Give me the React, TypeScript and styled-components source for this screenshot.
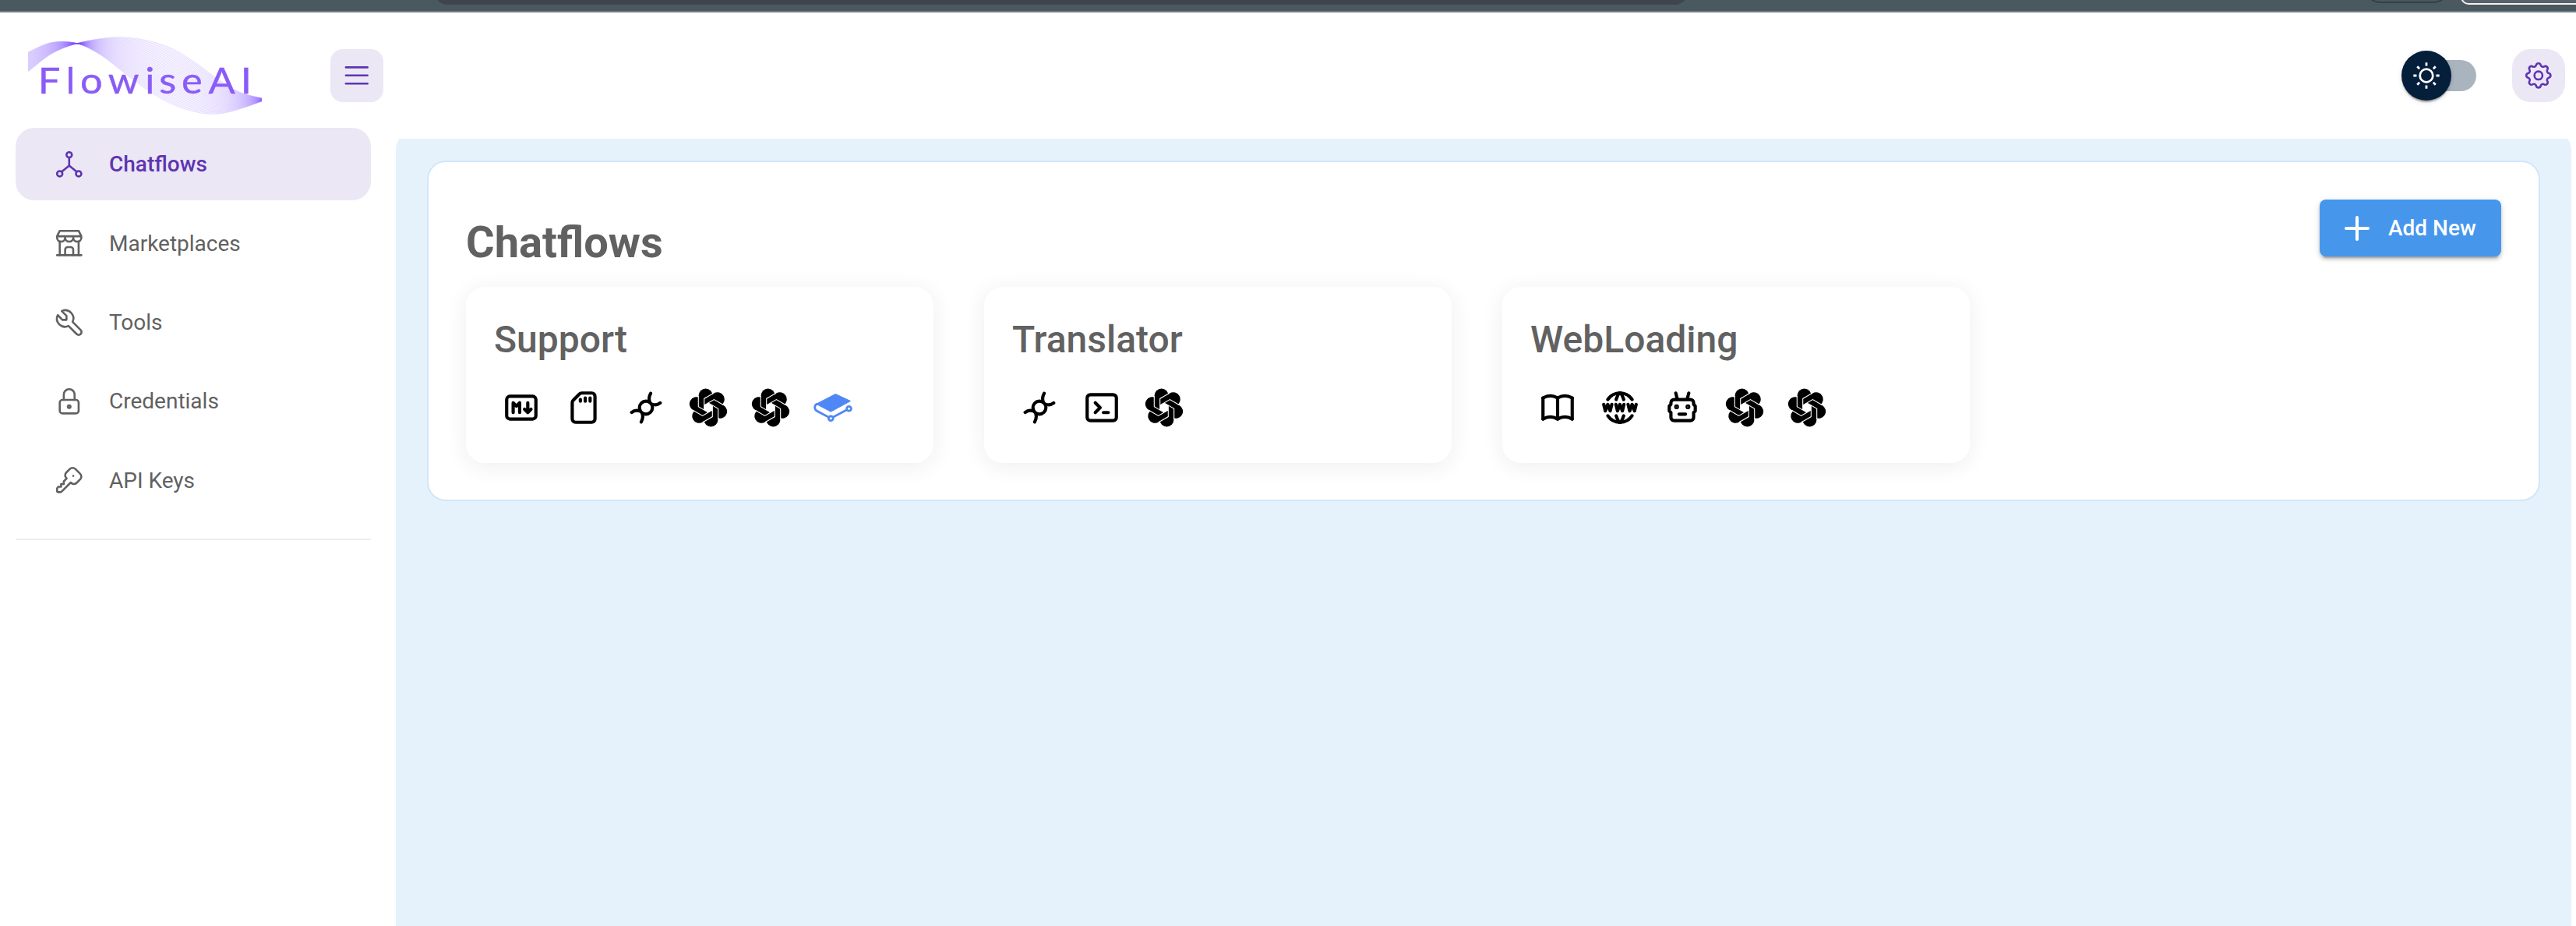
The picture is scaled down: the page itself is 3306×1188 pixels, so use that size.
import React from "react";
import styled, { createGlobalStyle } from "styled-components";
import {
  TbBook,
  TbBuildingStore,
  TbDeviceSdCard,
  TbHierarchy,
  TbKey,
  TbLock,
  TbMarkdown,
  TbMenu2,
  TbPlus,
  TbSettings,
  TbTerminal2,
  TbTool,
  TbWorldWww,
} from "react-icons/tb";

const Global = createGlobalStyle`
  * { box-sizing: border-box; }
  body { margin: 0; background: #fff; font-family: Roboto, "Liberation Sans", sans-serif; color: #616161; }
`;

const Page = styled.div`
  height: 1188px;
  display: flex;
  flex-direction: column;
  overflow: hidden;
`;

const Chrome = styled.div`
  position: relative;
  flex: none;
  height: 16px;
  background: #4a5860;
  border-bottom: 2px solid #737d83;
  overflow: hidden;
`;
const AddressBar = styled.div`
  position: absolute;
  left: 558px;
  top: -60px;
  width: 1608px;
  height: 66px;
  border-radius: 16px;
  background: #3e454d;
`;
const ChromeChip = styled.div`
  position: absolute;
  left: 3032px;
  top: -60px;
  width: 114px;
  height: 64px;
  border: 2px solid #353f46;
  border-radius: 24px;
`;
const ChromeOutline = styled.div`
  position: absolute;
  left: 3158px;
  top: -60px;
  width: 200px;
  height: 66px;
  border: 2px solid #fbeee6;
  border-radius: 10px;
  background: #56636a;
`;

const Header = styled.header`
  flex: none;
  height: 162px;
  padding: 0 14px 0 36px;
  display: flex;
  align-items: flex-start;
`;
const LogoBox = styled.div`
  width: 388px;
  padding-top: 31px;
  svg { display: block; }
`;
const IconButton = styled.button<{ $radius: number }>`
  width: 68px;
  height: 68px;
  margin-top: 47px;
  padding: 0;
  border: 0;
  border-radius: ${(p) => p.$radius}px;
  background: #ebe7f5;
  color: #5e35b1;
  display: flex;
  align-items: center;
  justify-content: center;
  svg { width: 41.6px; height: 41.6px; stroke-width: 1.5; }
`;
const Spacer = styled.div`
  flex: 1;
`;
const SwitchTrack = styled.div`
  width: 80px;
  height: 40px;
  margin: 61px 46px 0 0;
  border-radius: 20px;
  background: #aab4be;
  display: flex;
  align-items: center;
`;
const SwitchThumb = styled.div`
  flex: none;
  width: 64px;
  height: 64px;
  margin-left: -16px;
  border-radius: 50%;
  background: #051e3a;
  display: flex;
  align-items: center;
  justify-content: center;
  box-shadow: 0 4px 2px -2px rgba(0, 0, 0, 0.2), 0 2px 2px rgba(0, 0, 0, 0.14), 0 2px 6px rgba(0, 0, 0, 0.12);
`;

const Body = styled.div`
  flex: 1;
  min-height: 0;
  display: flex;
`;
const Sidebar = styled.nav`
  width: 508px;
  flex: none;
  padding: 0 32px 0 20px;
  margin-top: -14px;
`;
const NavItem = styled.a<{ $active?: boolean }>`
  display: flex;
  align-items: center;
  height: 93.36px;
  margin-bottom: 8px;
  padding-left: 48px;
  border-radius: 24px;
  font-size: 28px;
  font-weight: ${(p) => (p.$active ? 500 : 400)};
  color: ${(p) => (p.$active ? "#5e35b1" : "#616161")};
  background: ${(p) => (p.$active ? "#ebe7f5" : "transparent")};
  svg { width: 41.6px; height: 41.6px; stroke-width: 1.5; margin-right: 30.4px; }
`;
const Divider = styled.hr`
  margin: 20px 0 0;
  border: 0;
  height: 2px;
  background: #eeeeee;
`;
const NavList = styled.div`
  display: flow-root;
`;

const Main = styled.main`
  flex: 1;
  min-width: 0;
  margin-right: 6px;
  overflow: hidden;
`;
const Canvas = styled.div`
  height: 1100px;
  margin-top: -10px;
  padding: 38px 40px 0;
  border-radius: 24px;
  background: #e5f2fc;
`;
const Panel = styled.section`
  height: 437px;
  padding: 48px;
  border: 2px solid #d1e6fa;
  border-radius: 24px;
  background: #fff;
`;
const PanelHead = styled.div`
  height: 112px;
  display: flex;
  justify-content: space-between;
  align-items: flex-start;
`;
const Title = styled.h1`
  margin: 22px 0 0;
  font-size: 56px;
  line-height: 66px;
  font-weight: 700;
`;
const AddButton = styled.button`
  width: 233px;
  height: 73px;
  padding: 0 0 0 24px;
  border: 0;
  border-radius: 8px;
  background: #4697ec;
  color: #fff;
  font: 500 28px Roboto, sans-serif;
  display: flex;
  align-items: center;
  gap: 16px;
  box-shadow: 0 6px 2px -4px rgba(0, 0, 0, 0.2), 0 4px 4px rgba(0, 0, 0, 0.14), 0 2px 10px rgba(0, 0, 0, 0.12);
  svg { width: 48px; height: 48px; stroke-width: 2; }
`;
const Grid = styled.div`
  display: grid;
  grid-template-columns: repeat(4, 1fr);
  column-gap: 48px;
`;
const Card = styled.article`
  width: 600px;
  height: 226px;
  padding: 36px;
  border-radius: 24px;
  background: #fff;
  box-shadow: 0 4px 28px rgba(32, 40, 45, 0.08);
`;
const CardTitle = styled.h2`
  margin: 0;
  font-size: 48px;
  line-height: 64px;
  font-weight: 500;
`;
const NodeIcons = styled.div`
  display: flex;
  gap: 30px;
  margin: 30px 0 0 10px;
  color: #000;
  svg { width: 50px; height: 50px; flex: none; }
`;

/* The ribbon is a sheaf of strands blended between its two edge curves: [x, y of first edge, y of second edge]. */
const ribbon = [
  [0, 20, 45],
  [30, 7.5, 22],
  [62, 8.5, 9],
  [94, 24, 2.5],
  [124, 47, 1],
  [157, 71, 6],
  [186, 87, 16],
  [217, 97, 35],
  [244, 99, 55],
  [271, 93, 71],
  [300, 83, 79],
];

const strand = (t: number) => {
  const pts = ribbon.map(([x, a, b]) => [x, a + (b - a) * t]);
  let d = `M${pts[0][0]} ${pts[0][1].toFixed(2)}`;
  for (let i = 0; i < pts.length - 1; i++) {
    const p0 = pts[Math.max(i - 1, 0)];
    const p1 = pts[i];
    const p2 = pts[i + 1];
    const p3 = pts[Math.min(i + 2, pts.length - 1)];
    const c1 = [p1[0] + (p2[0] - p0[0]) / 6, p1[1] + (p2[1] - p0[1]) / 6];
    const c2 = [p2[0] - (p3[0] - p1[0]) / 6, p2[1] - (p3[1] - p1[1]) / 6];
    d += `C${[...c1, ...c2, ...p2].map((v) => v.toFixed(2)).join(" ")}`;
  }
  return d;
};

const strands = Array.from({ length: 40 }, (_, i) => strand(i / 39));

const Logo = () => (
  <svg width="300" height="104" viewBox="0 0 300 104">
    <g fill="none" stroke="#7c4dff" strokeWidth="0.7" strokeOpacity="0.27">
      {strands.map((d) => (
        <path key={d} d={d} />
      ))}
    </g>
    <text
      transform="scale(1.1 1)"
      x="11.5 44 61 93.500 136.500 153 179 210.500 248"
      y="73"
      fontFamily="Lato, sans-serif"
      fontSize="46"
      fill="#8a5cf6"
      stroke="#8a5cf6"
      strokeWidth="0.4"
    >
      FlowiseAI
    </text>
  </svg>
);

const SunIcon = () => (
  <svg width="40" height="40" viewBox="0 0 20 20">
    <path
      fill="#fff"
      d="M9.305 1.667V3.75h1.389V1.667h-1.39zm-4.707 1.95l-.982.982L5.09 6.072l.982-.982-1.473-1.473zm10.802 0L13.927 5.09l.982.982 1.473-1.473-.982-.982zM10 5.139a4.872 4.872 0 00-4.862 4.86A4.872 4.872 0 0010 14.862 4.872 4.872 0 0014.86 10 4.872 4.872 0 0010 5.139zm0 1.389A3.462 3.462 0 0113.471 10a3.462 3.462 0 01-3.473 3.472A3.462 3.462 0 016.527 10 3.462 3.462 0 0110 6.528zM1.665 9.305v1.39h2.083v-1.39H1.666zm14.583 0v1.39h2.084v-1.39h-2.084zM5.09 13.928L3.616 15.4l.982.982 1.473-1.473-.982-.982zm9.82 0l-.982.982 1.473 1.473.982-.982-1.473-1.473zM9.305 16.25v2.083h1.389V16.25h-1.39z"
    />
  </svg>
);

const stroke = {
  fill: "none",
  stroke: "currentColor",
  strokeWidth: 2,
  strokeLinecap: "round",
  strokeLinejoin: "round",
} as const;

const ChainIcon = () => (
  <svg viewBox="0 0 24 24" {...stroke}>
    <circle cx="12" cy="12" r="4" />
    <path d="M14.900 3.200c-1 1.800-1.200 3.500-.6 5.300M20.800 9.100c-1.500 1.200-3.200 1.400-5 .8M9.100 20.800c1-1.800 1.200-3.500.6-5.300M3.200 14.900c1.500-1.200 3.200-1.400 5-.8" />
  </svg>
);

const RobotIcon = () => (
  <svg viewBox="0 0 24 24" {...stroke}>
    <path d="M7 7h10a2 2 0 0 1 2 2v1l1 1v3l-1 1v3a2 2 0 0 1-2 2h-10a2 2 0 0 1-2-2v-3l-1-1v-3l1-1v-1a2 2 0 0 1 2-2zM10 16h4M9 7l-1-4M15 7l1-4" />
    <circle cx="8.500" cy="11.500" r=".5" fill="currentColor" />
    <circle cx="15.500" cy="11.500" r=".5" fill="currentColor" />
  </svg>
);

const turns = [0, 60, 120, 180, 240, 300];

const OpenAiIcon = () => (
  <svg viewBox="-25 -25 50 50">
    <circle r="17" fill="#000" />
    {turns.map((a) => (
      <circle key={a} cx="-3.400" cy="-15.500" r="9" fill="#000" transform={`rotate(${a})`} />
    ))}
    <path d="M-5.300-3.060L0-6.120 5.300-3.060V3.060L0 6.120-5.300 3.060z" fill="#fff" />
    {turns.map((a) => (
      <path
        key={a}
        d="M-5.300 3.060V-11.600L6.600-18.500"
        fill="none"
        stroke="#fff"
        strokeWidth="1.100"
        transform={`rotate(${a})`}
      />
    ))}
  </svg>
);

const GitbookIcon = () => (
  <svg viewBox="0 0 50 50" fill="none" stroke="#5087f6" strokeWidth="2.800">
    <path fill="#5087f6" stroke="#5087f6" strokeWidth="1" strokeLinejoin="round" d="M3.500 20.300L28.300 7.500 47.500 16.500 22.300 30.200z" />
    <path d="M5 20c-4 1.500-4.500 6.500-1 9l18.300 9.700L45.700 26.300" />
    <circle cx="22.300" cy="38.700" r="2.900" fill="#fff" />
    <circle cx="45.500" cy="26.300" r="2.900" fill="#fff" />
  </svg>
);

const nav = [
  { label: "Chatflows", Icon: TbHierarchy, active: true },
  { label: "Marketplaces", Icon: TbBuildingStore },
  { label: "Tools", Icon: TbTool },
  { label: "Credentials", Icon: TbLock },
  { label: "API Keys", Icon: TbKey },
];

const flows = [
  { name: "Support", icons: [TbMarkdown, TbDeviceSdCard, ChainIcon, OpenAiIcon, OpenAiIcon, GitbookIcon] },
  { name: "Translator", icons: [ChainIcon, TbTerminal2, OpenAiIcon] },
  { name: "WebLoading", icons: [TbBook, TbWorldWww, RobotIcon, OpenAiIcon, OpenAiIcon] },
];

export default function App() {
  return (
    <Page>
      <Global />
      <Chrome>
        <AddressBar />
        <ChromeChip />
        <ChromeOutline />
      </Chrome>
      <Header>
        <LogoBox>
          <Logo />
        </LogoBox>
        <IconButton $radius={16}>
          <TbMenu2 />
        </IconButton>
        <Spacer />
        <SwitchTrack>
          <SwitchThumb>
            <SunIcon />
          </SwitchThumb>
        </SwitchTrack>
        <IconButton $radius={24}>
          <TbSettings />
        </IconButton>
      </Header>
      <Body>
        <Sidebar>
          <NavList>
            {nav.map(({ label, Icon, active }) => (
              <NavItem key={label} $active={active}>
                <Icon />
                {label}
              </NavItem>
            ))}
          </NavList>
          <Divider />
        </Sidebar>
        <Main>
          <Canvas>
            <Panel>
              <PanelHead>
                <Title>Chatflows</Title>
                <AddButton>
                  <TbPlus />
                  Add New
                </AddButton>
              </PanelHead>
              <Grid>
                {flows.map((flow) => (
                  <Card key={flow.name}>
                    <CardTitle>{flow.name}</CardTitle>
                    <NodeIcons>
                      {flow.icons.map((Icon, i) => (
                        <Icon key={i} />
                      ))}
                    </NodeIcons>
                  </Card>
                ))}
              </Grid>
            </Panel>
          </Canvas>
        </Main>
      </Body>
    </Page>
  );
}
